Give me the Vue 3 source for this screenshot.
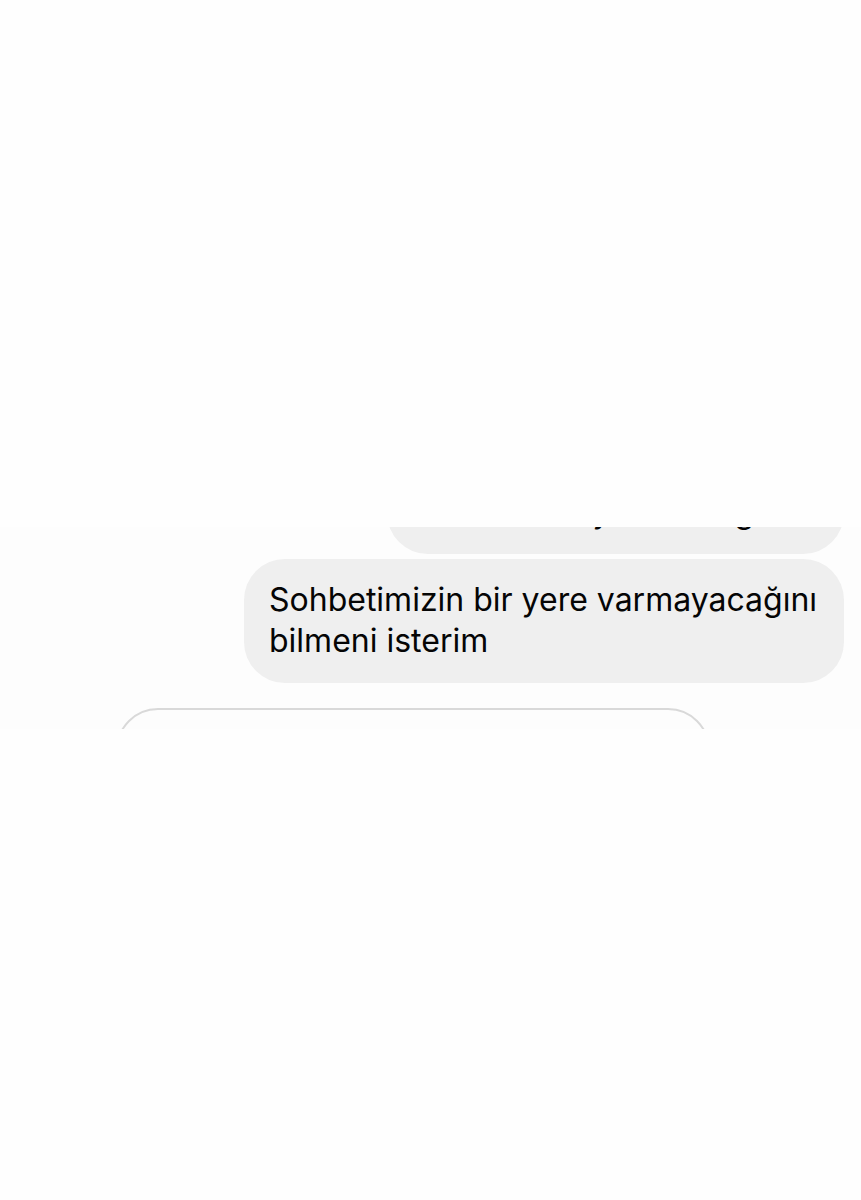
<script setup>
const message = 'Sohbetimizin bir yere varmayacağını bilmeni isterim'
</script>

<template>
  <main class="page">
    <section class="thread">
      <div class="bubble previous"><span>y</span><span>ğ</span></div>
      <p class="bubble current">{{ message }}</p>
      <div class="card"></div>
    </section>
  </main>
</template>

<style>
body {
  margin: 0;
  background: #fefefe;
}
</style>

<style scoped>
.page {
  box-sizing: border-box;
  min-height: 100vh;
  padding-top: 527px;
  background: #fefefe;
  color: #050505;
  font-family: Inter, "Liberation Sans", sans-serif;
  font-size: 32px;
  line-height: 41px;
}

.thread {
  display: flex;
  flex-direction: column;
  height: 202px;
  padding: 0 17px 0 116px;
  overflow: hidden;
  background: #fdfdfd;
}

.bubble {
  box-sizing: border-box;
  flex: none;
  align-self: flex-end;
  margin: 0;
  padding: 20px 24px 22px 25px;
  border-radius: 41px;
  background: #efefef;
}

.previous {
  display: flex;
  justify-content: flex-end;
  gap: 124px;
  width: 457px;
  margin-top: -56px;
  padding-right: 90px;
}

.current {
  width: 600px;
  max-width: 100%;
  margin-top: 5px;
}

.card {
  box-sizing: border-box;
  flex: none;
  width: 594px;
  max-width: 100%;
  height: 120px;
  margin-top: 25px;
  border: 2px solid #d9d9d9;
  border-radius: 42px;
}
</style>
